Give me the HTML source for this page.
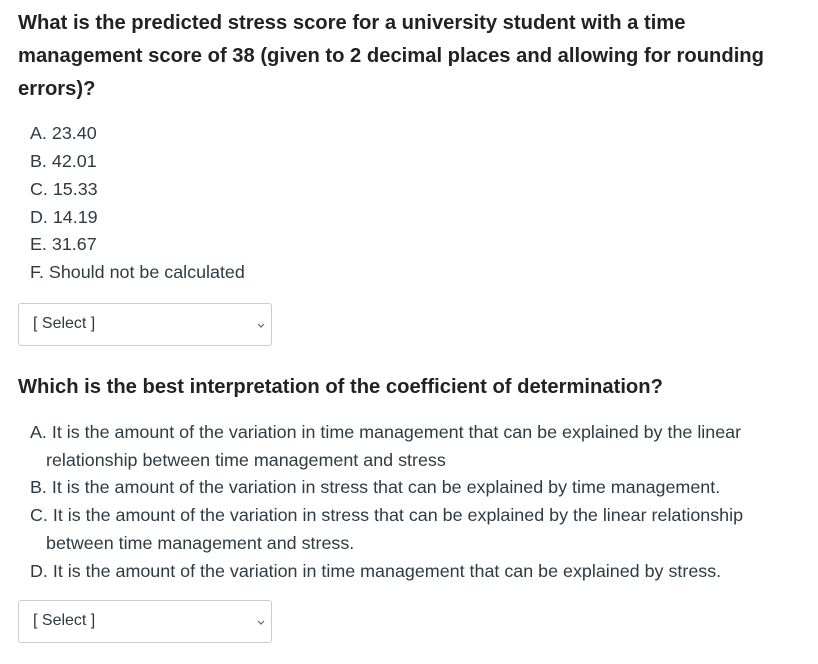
<!DOCTYPE html>
<html><head><style>
body{margin:0;background:#fff;font-family:"Liberation Sans",sans-serif;color:#2d3b45;width:818px;height:664px;overflow:hidden;position:relative}
.h{position:absolute;left:18px;font-weight:bold;font-size:20.2px;white-space:nowrap;color:#222}
.o{position:absolute;left:30px;font-size:17.9px;white-space:nowrap;color:#2d3b45}
.sel{position:absolute;left:18px;width:254px;height:43px;border:1px solid #ccc;border-radius:3px;box-sizing:border-box;background:#fff}
.sel span{position:absolute;left:14px;top:11px;font-size:16px;color:#2d3b45}
.sel svg{position:absolute;right:6px;top:19px}
</style></head><body>
<div class="h" style="top:12px">What is the predicted stress score for a university student with a time</div>
<div class="h" style="top:45px">management score of 38 (given to 2 decimal places and allowing for rounding</div>
<div class="h" style="top:78px">errors)?</div>
<div class="o" style="top:123px">A. 23.40</div>
<div class="o" style="top:151px">B. 42.01</div>
<div class="o" style="top:179px">C. 15.33</div>
<div class="o" style="top:207px">D. 14.19</div>
<div class="o" style="top:234px">E. 31.67</div>
<div class="o" style="top:262px">F. Should not be calculated</div>
<div class="sel" style="top:303px"><span>[ Select ]</span><svg width="8" height="6" viewBox="0 0 8 6"><path d="M1 1l3 3 3-3" stroke="#666" stroke-width="1.2" fill="none"/></svg></div>
<div class="h" style="top:376px">Which is the best interpretation of the coefficient of determination?</div>
<div class="o" style="top:422px">A. It is the amount of the variation in time management that can be explained by the linear</div>
<div class="o" style="top:450px;left:46px">relationship between time management and stress</div>
<div class="o" style="top:477px">B. It is the amount of the variation in stress that can be explained by time management.</div>
<div class="o" style="top:505px">C. It is the amount of the variation in stress that can be explained by the linear relationship</div>
<div class="o" style="top:533px;left:46px">between time management and stress.</div>
<div class="o" style="top:561px">D. It is the amount of the variation in time management that can be explained by stress.</div>
<div class="sel" style="top:600px"><span>[ Select ]</span><svg width="8" height="6" viewBox="0 0 8 6"><path d="M1 1l3 3 3-3" stroke="#666" stroke-width="1.2" fill="none"/></svg></div>
</body></html>
